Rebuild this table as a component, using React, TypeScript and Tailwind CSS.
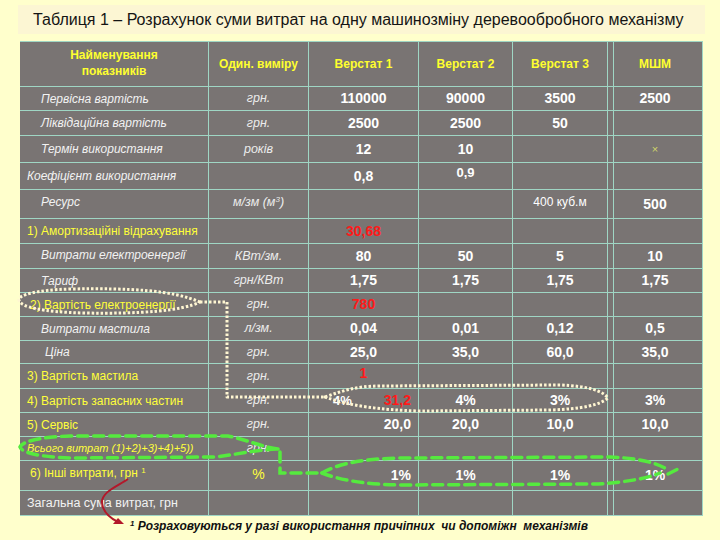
import React from "react";

type Row = {
  h: string;
  label: React.ReactNode;
  labelCls: string;
  unit?: React.ReactNode;
  unitCls?: string;
  vals: React.ReactNode[];
};

const W = ["w-[189px]", "w-[100px]", "w-[110px]", "w-[94px]", "w-[95px]", "w-[95px]"];

const it = "italic text-[12px] text-[#f2f2f2]";
const yl = "text-[12px] text-[#ffff3a]";

const rows: Row[] = [
  { h: "h-[24px]", label: "Первісна вартість", labelCls: `pl-[21px] ${it}`, unit: "грн.", vals: ["110000", "90000", "3500", "2500"] },
  { h: "h-[25px]", label: "Ліквідаційна вартість", labelCls: `pl-[21px] ${it}`, unit: "грн.", vals: ["2500", "2500", "50", ""] },
  {
    h: "h-[27px]",
    label: "Термін використання",
    labelCls: `pl-[21px] ${it}`,
    unit: "років",
    vals: ["12", "10", "", <span className="text-[11px] font-normal text-[#cfd56a]">×</span>],
  },
  {
    h: "h-[27px]",
    label: "Коефіцієнт використання",
    labelCls: `pl-[7px] ${it}`,
    vals: ["0,8", <span className="text-[13px] -translate-y-[3px]">0,9</span>, "", ""],
  },
  {
    h: "h-[29px]",
    label: "Ресурс",
    labelCls: `pl-[21px] pb-[4px] ${it}`,
    unit: (
      <span>
        м/зм (м<sup className="text-[8px]">3</sup>)
      </span>
    ),
    unitCls: "pb-[4px]",
    vals: ["", "", <span className="text-[12px] font-normal pb-[4px]">400 куб.м</span>, <span className="pt-[1px]">500</span>],
  },
  {
    h: "h-[25px]",
    label: "1) Амортизаційні відрахування",
    labelCls: `pl-[7px] ${yl}`,
    vals: [<span className="text-[#ff1a1a]">30,68</span>, "", "", ""],
  },
  { h: "h-[25px]", label: "Витрати електроенергії", labelCls: `pl-[21px] pb-[3px] ${it}`, unit: "КВт/зм.", vals: ["80", "50", "5", "10"] },
  { h: "h-[24px]", label: "Тариф", labelCls: `pl-[21px] ${it}`, unit: "грн/КВт", vals: ["1,75", "1,75", "1,75", "1,75"] },
  {
    h: "h-[24px]",
    label: "2) Вартість електроенергії",
    labelCls: `pl-[10px] ${yl}`,
    unit: "грн.",
    vals: [<span className="text-[#ff1a1a]">780</span>, "", "", ""],
  },
  { h: "h-[24px]", label: "Витрати мастила", labelCls: `pl-[21px] ${it}`, unit: "л/зм.", vals: ["0,04", "0,01", "0,12", "0,5"] },
  { h: "h-[23px]", label: "Ціна", labelCls: `pl-[25px] ${it}`, unit: "грн.", vals: ["25,0", "35,0", "60,0", "35,0"] },
  {
    h: "h-[25px]",
    label: "3) Вартість мастила",
    labelCls: `pl-[7px] ${yl}`,
    unit: "грн.",
    vals: [<span className="text-[#ff1a1a] pb-[6px]">1</span>, "", "", ""],
  },
  {
    h: "h-[24px]",
    label: "4) Вартість запасних частин",
    labelCls: `pl-[7px] ${yl}`,
    unit: "грн.",
    vals: [
      <span className="flex w-full items-center pl-[24px] gap-[32px]">
        <span className="text-[13px]">4%</span>
        <span className="text-[#ff1a1a]">31,2</span>
      </span>,
      "4%",
      "3%",
      "3%",
    ],
  },
  {
    h: "h-[24px]",
    label: "5) Сервіс",
    labelCls: `pl-[7px] ${yl}`,
    unit: "грн.",
    vals: [<span className="flex w-full justify-end pr-[7px]">20,0</span>, "20,0", "10,0", "10,0"],
  },
  {
    h: "h-[24px]",
    label: "Всього витрат (1)+2)+3)+4)+5))",
    labelCls: "pl-[7px] italic text-[11px] text-[#ffff3a]",
    unit: "грн.",
    vals: ["", "", "", ""],
  },
  {
    h: "h-[30px]",
    label: (
      <span>
        6) Інші витрати, грн <sup className="text-[8px]">1</sup>
      </span>
    ),
    labelCls: `pl-[10px] pb-[5px] ${yl}`,
    unit: <span className="not-italic text-[14px] text-[#ffff3a]">%</span>,
    unitCls: "pb-[3px]",
    vals: [<span className="flex w-full justify-end pr-[7px]">1%</span>, "1%", "1%", "1%"],
  },
  { h: "h-[25px]", label: "Загальна сума витрат, грн", labelCls: "pl-[7px] text-[12.5px] text-[#f2f2f2]", vals: ["", "", "", ""] },
];

const cellBase = "flex items-center border-r border-b border-[#9fd6c4] shrink-0";
const dbl = "shadow-[inset_5px_0_0_#797473,inset_6px_0_0_#9fd6c4]";

function Overlay() {
  return (
    <svg className="absolute left-0 top-0 pointer-events-none" width={720} height={540} viewBox="0 0 720 540">
      <g fill="none" stroke="#fff6d2" strokeWidth={3} strokeDasharray="2.5 2" strokeLinejoin="round">
        <path d="M200 302 C172 290 130 288 70 289 C36 290 18 295 19 300 C20 307 42 312 84 313 C140 314 182 311 200 302 Z" />
        <path d="M200 302 L227 302 L227 397 L325 397" />
        <path d="M325 397 C342 391 356 386 380 386 L560 385 C588 386 603 391 608 398 C600 405 582 409 550 410 L420 411 C380 410 350 406 325 397 Z" />
      </g>
      <g fill="none" stroke="#55ea3e" strokeWidth={3.5} strokeDasharray="10 6" strokeLinecap="round">
        <path d="M278 449 C262 447 248 440 228 436 L70 436 C38 437 22 442 20 447 C22 453 40 457 72 458 L214 457 C236 455 252 450 278 449" />
        <path d="M280 452 L280 473 L322 473" />
        <path d="M322 473 C340 463 362 459 400 458 L610 457 C638 458 658 463 668 470" />
        <path d="M322 473 C340 480 362 484 400 485 L598 484 C628 482 648 478 660 473" />
        <path d="M668 474 L680 468" />
      </g>
      <g fill="none" stroke="#b3182a" strokeWidth={2}>
        <path d="M128 479 C118 486 101 492 102 503 C103 512 110 518 118 522" />
      </g>
      <path d="M124 524 L113 524 L118 518 Z" fill="#b3182a" />
    </svg>
  );
}

export default function App() {
  return (
    <div className="relative w-[720px] h-[540px] bg-[#ffffcc] overflow-hidden" style={{ fontFamily: '"Liberation Sans", Arial, sans-serif' }}>
      <div className="pt-[5px] pl-[18px]">
        <div className="w-[687px] h-[29px] bg-[#fcf6d3] flex items-center pl-[15px] text-[16px] text-[#141414]">
          Таблиця 1 – Розрахунок суми витрат на одну машинозміну деревообробного механізму
        </div>
      </div>
      <div className="ml-[20px] mt-[7px] w-[683px] bg-[#797473] border-t border-[#9fd6c4]">
        <div className="flex h-[45px] font-bold text-[12px] text-[#ffff2e]">
          <div className={`${cellBase} ${W[0]} justify-center text-center leading-[16px] pb-[2px]`}>
            Найменування
            <br />
            показників
          </div>
          <div className={`${cellBase} ${W[1]} justify-center`}>Один. виміру</div>
          <div className={`${cellBase} ${W[2]} justify-center`}>Верстат 1</div>
          <div className={`${cellBase} ${W[3]} justify-center`}>Верстат 2</div>
          <div className={`${cellBase} ${W[4]} justify-center`}>Верстат 3</div>
          <div className={`${cellBase} ${W[5]} justify-center ${dbl}`}>МШМ</div>
        </div>
        {rows.map((r, i) => (
          <div key={i} className={`flex ${r.h}`}>
            <div className={`${cellBase} ${W[0]} whitespace-nowrap ${r.labelCls}`}>{r.label}</div>
            <div className={`${cellBase} ${W[1]} justify-center italic text-[12.5px] text-[#ececec] ${r.unitCls ?? ""}`}>{r.unit}</div>
            {r.vals.map((v, j) => (
              <div key={j} className={`${cellBase} ${W[j + 2]} justify-center font-bold text-[14px] text-white ${j === 3 ? dbl : ""}`}>
                {v}
              </div>
            ))}
          </div>
        ))}
      </div>
      <div className="pl-[130px] pt-[1px] text-[12px] font-bold italic text-[#111] whitespace-pre">
        <sup className="text-[8px]">1</sup> Розраховуються у разі використання причіпних  чи допоміжн  механізмів
      </div>
      <Overlay />
    </div>
  );
}
